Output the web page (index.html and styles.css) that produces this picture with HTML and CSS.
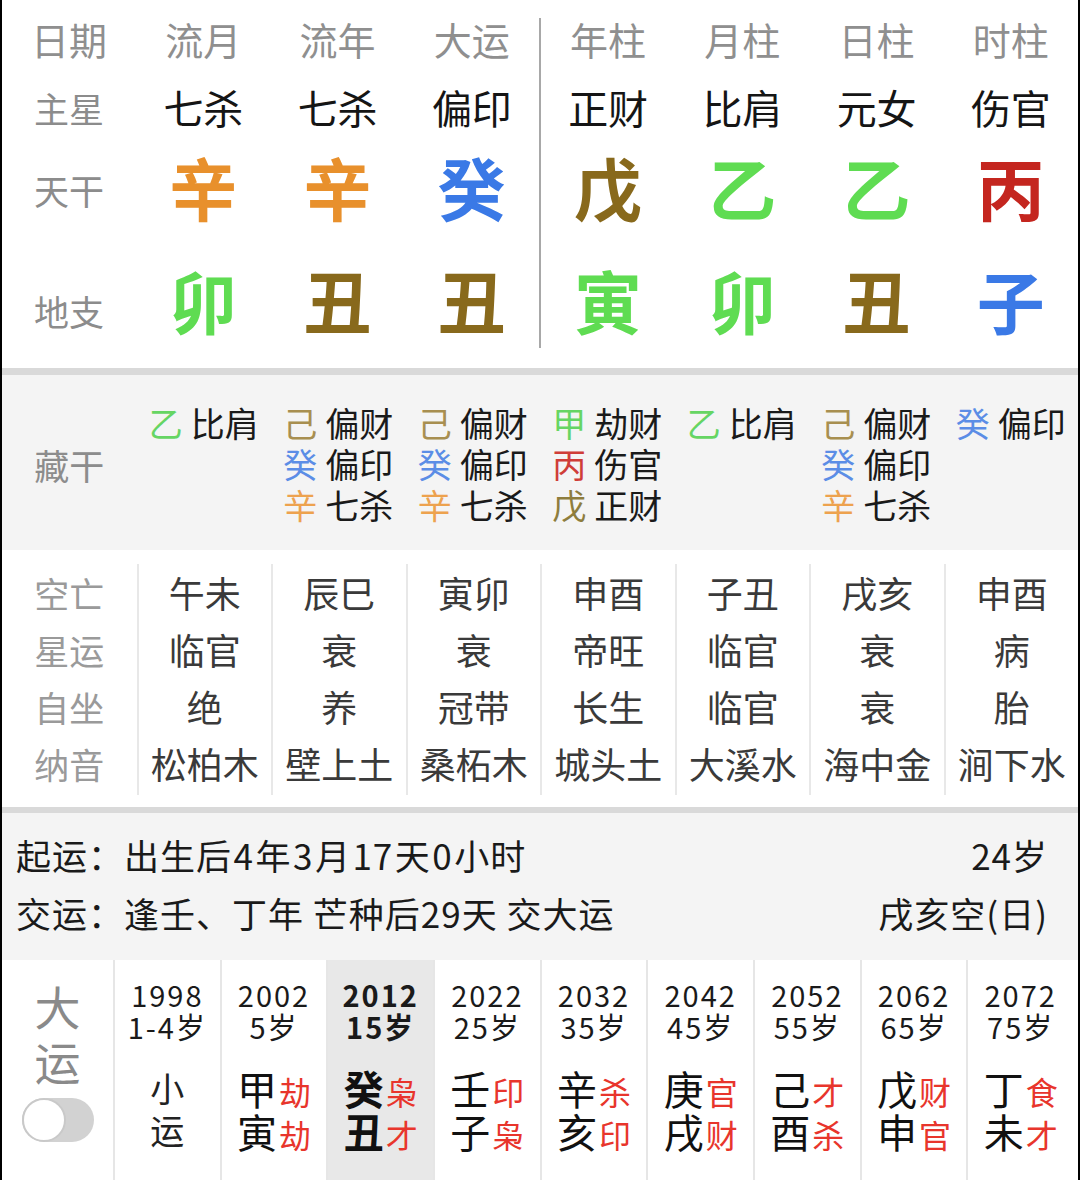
FILE: index.html
```html
<!DOCTYPE html>
<html lang="zh-CN">
<head>
<meta charset="utf-8">
<title>八字排盘</title>
<link rel="stylesheet" href="styles.css">
</head>
<body>
<div class="page">
  <section class="pillars">
    <div class="pgroup">
      <div class="cell hd">日期</div><div class="cell hd">流月</div><div class="cell hd">流年</div><div class="cell hd">大运</div>
      <div class="cell lbl">主星</div><div class="cell star">七杀</div><div class="cell star">七杀</div><div class="cell star">偏印</div>
      <div class="cell lbl">天干</div><div class="cell big c-orange">辛</div><div class="cell big c-orange">辛</div><div class="cell big c-blue">癸</div>
      <div class="cell lbl br-l">地支</div><div class="cell big br c-green">卯</div><div class="cell big br c-brown">丑</div><div class="cell big br c-brown">丑</div>
    </div>
    <div class="pgroup right">
      <div class="cell hd">年柱</div><div class="cell hd">月柱</div><div class="cell hd">日柱</div><div class="cell hd">时柱</div>
      <div class="cell star">正财</div><div class="cell star">比肩</div><div class="cell star">元女</div><div class="cell star">伤官</div>
      <div class="cell big c-brown">戊</div><div class="cell big c-green">乙</div><div class="cell big c-green">乙</div><div class="cell big c-red">丙</div>
      <div class="cell big br c-green">寅</div><div class="cell big br c-green">卯</div><div class="cell big br c-brown">丑</div><div class="cell big br c-blue">子</div>
    </div>
  </section>
  <div class="band"></div>
  <section class="hidden">
    <div class="hlabel">藏干</div>
    <div class="hcol"><div class="stack"><div><span class="g h-green">乙</span>比肩</div></div></div>
    <div class="hcol"><div class="stack"><div><span class="g h-brown">己</span>偏财</div><div><span class="g h-blue">癸</span>偏印</div><div><span class="g h-orange">辛</span>七杀</div></div></div>
    <div class="hcol"><div class="stack"><div><span class="g h-brown">己</span>偏财</div><div><span class="g h-blue">癸</span>偏印</div><div><span class="g h-orange">辛</span>七杀</div></div></div>
    <div class="hcol"><div class="stack"><div><span class="g h-green">甲</span>劫财</div><div><span class="g h-red">丙</span>伤官</div><div><span class="g h-olive">戊</span>正财</div></div></div>
    <div class="hcol"><div class="stack"><div><span class="g h-green">乙</span>比肩</div></div></div>
    <div class="hcol"><div class="stack"><div><span class="g h-brown">己</span>偏财</div><div><span class="g h-blue">癸</span>偏印</div><div><span class="g h-orange">辛</span>七杀</div></div></div>
    <div class="hcol"><div class="stack"><div><span class="g h-blue">癸</span>偏印</div></div></div>
  </section>
  <section class="info">
    <div class="icol lab"><div>空亡</div><div>星运</div><div>自坐</div><div>纳音</div></div>
    <div class="icol"><div>午未</div><div>临官</div><div>绝</div><div>松柏木</div></div>
    <div class="icol"><div>辰巳</div><div>衰</div><div>养</div><div>壁上土</div></div>
    <div class="icol"><div>寅卯</div><div>衰</div><div>冠带</div><div>桑柘木</div></div>
    <div class="icol"><div>申酉</div><div>帝旺</div><div>长生</div><div>城头土</div></div>
    <div class="icol"><div>子丑</div><div>临官</div><div>临官</div><div>大溪水</div></div>
    <div class="icol"><div>戌亥</div><div>衰</div><div>衰</div><div>海中金</div></div>
    <div class="icol"><div>申酉</div><div>病</div><div>胎</div><div>涧下水</div></div>
  </section>
  <div class="band band2"></div>
  <section class="qiyun">
    <div class="qrow"><span>起运：出生后<span class="n">4</span>年<span class="n">3</span>月<span class="n">17</span>天<span class="n">0</span>小时</span><span>24岁</span></div>
    <div class="qrow"><span>交运：逢壬、丁年 芒种后29天 交大运</span><span>戌亥空(日)</span></div>
  </section>
  <section class="dayun">
    <div class="dfirst">
      <div class="dy-title"><div>大</div><div>运</div></div>
      <div class="toggle"><span class="knob"></span></div>
    </div>
    <div class="dcol"><div class="yr">1998</div><div class="yr">1-4岁</div><div class="xy"><div>小</div><div>运</div></div></div>
    <div class="dcol"><div class="yr">2002</div><div class="yr">5岁</div><div class="stems"><div class="srow"><span class="sb">甲</span><span class="sr">劫</span></div><div class="srow"><span class="sb">寅</span><span class="sr">劫</span></div></div></div>
    <div class="dcol sel"><div class="yr">2012</div><div class="yr">15岁</div><div class="stems"><div class="srow"><span class="sb">癸</span><span class="sr">枭</span></div><div class="srow"><span class="sb">丑</span><span class="sr">才</span></div></div></div>
    <div class="dcol"><div class="yr">2022</div><div class="yr">25岁</div><div class="stems"><div class="srow"><span class="sb">壬</span><span class="sr">印</span></div><div class="srow"><span class="sb">子</span><span class="sr">枭</span></div></div></div>
    <div class="dcol"><div class="yr">2032</div><div class="yr">35岁</div><div class="stems"><div class="srow"><span class="sb">辛</span><span class="sr">杀</span></div><div class="srow"><span class="sb">亥</span><span class="sr">印</span></div></div></div>
    <div class="dcol"><div class="yr">2042</div><div class="yr">45岁</div><div class="stems"><div class="srow"><span class="sb">庚</span><span class="sr">官</span></div><div class="srow"><span class="sb">戌</span><span class="sr">财</span></div></div></div>
    <div class="dcol"><div class="yr">2052</div><div class="yr">55岁</div><div class="stems"><div class="srow"><span class="sb">己</span><span class="sr">才</span></div><div class="srow"><span class="sb">酉</span><span class="sr">杀</span></div></div></div>
    <div class="dcol"><div class="yr">2062</div><div class="yr">65岁</div><div class="stems"><div class="srow"><span class="sb">戊</span><span class="sr">财</span></div><div class="srow"><span class="sb">申</span><span class="sr">官</span></div></div></div>
    <div class="dcol"><div class="yr">2072</div><div class="yr">75岁</div><div class="stems"><div class="srow"><span class="sb">丁</span><span class="sr">食</span></div><div class="srow"><span class="sb">未</span><span class="sr">才</span></div></div></div>
  </section>
</div>
</body>
</html>
```

FILE: styles.css
```css
* { box-sizing: border-box; margin: 0; padding: 0; }
html, body { background: #000; }
body {
  width: 1080px;
  height: 1180px;
  overflow: hidden;
  font-family: "Noto Sans CJK SC", "Noto Sans", sans-serif;
}
.page {
  margin: 0 2px;
  background: #fff;
  height: 1180px;
  overflow: hidden;
}

/* pillars */
.pillars { display: flex; height: 368px; }
.pgroup {
  flex: 1;
  display: grid;
  grid-template-columns: repeat(4, 1fr);
  grid-template-rows: 48px 88px 76px 118px;
  margin-top: 18px;
  align-self: flex-start;
}
.pgroup.right { border-left: 2px solid #a8a8a8; }
.cell {
  display: flex;
  align-items: center;
  justify-content: center;
  line-height: 1;
  padding-bottom: 0.15em;
}
.hd { font-size: 38px; color: #8f8f8f; }
.lbl { font-size: 35px; color: #8c8c8c; }
.star { font-size: 40px; color: #151515; }
.big { font-size: 68px; font-weight: 700; }
.br { padding-top: 32px; }
.br-l { padding-top: 48px; }
.c-orange { color: #e8902c; }
.c-blue { color: #3a79e6; }
.c-brown { color: #88691c; }
.c-green { color: #5fdc52; }
.c-red { color: #c4261f; }

.band { height: 7px; background: #d9d9d9; }
.band2 { height: 6px; }

/* hidden stems */
.hidden {
  display: grid;
  grid-template-columns: repeat(8, 1fr);
  background: #f4f4f4;
  height: 175px;
  padding: 27px 0 25px;
}
.hlabel {
  align-self: center;
  text-align: center;
  font-size: 35px;
  line-height: 1;
  color: #8c8c8c;
  padding-top: 2px;
}
.hcol { display: flex; justify-content: center; }
.stack { font-size: 34px; line-height: 41px; color: #1a1a1a; }
.stack .g { margin-right: 8px; }
.h-green { color: #66d563; }
.h-brown { color: #a88f50; }
.h-blue { color: #5b8de6; }
.h-orange { color: #eda24e; }
.h-red { color: #cf3d38; }
.h-olive { color: #8e7d3d; }

/* info grid */
.info {
  display: grid;
  grid-template-columns: repeat(8, 1fr);
  height: 257px;
  padding: 14px 0 15px;
}
.icol { display: flex; flex-direction: column; align-items: center; padding-top: 3px; }
.icol + .icol { border-left: 2px solid #e8e8e8; }
.icol div { height: 57px; line-height: 57px; font-size: 36px; color: #3a3a3a; white-space: nowrap; margin-top: -3px; margin-bottom: 3px; }
.icol.lab div { color: #9a9a9a; font-size: 35px; }

/* qiyun */
.qiyun {
  background: #f4f4f4;
  height: 147px;
  padding: 12px 30px 19px 14px;
}
.qrow {
  display: flex;
  justify-content: space-between;
  align-items: center;
  height: 58px;
  font-size: 35px;
  color: #1a1a1a;
  letter-spacing: 1px;
}
.qrow .n { padding: 0 1.5px; }

/* dayun */
.dayun { display: flex; height: 220px; padding-right: 5px; }
.dfirst {
  width: 111px;
  display: flex;
  flex-direction: column;
  align-items: center;
  padding-top: 18px;
}
.dy-title { font-size: 46px; line-height: 55px; color: #8a8a8a; text-align: center; }
.toggle {
  margin-top: 10px;
  width: 72px;
  height: 44px;
  border-radius: 22px;
  background: #d2d2d2;
  position: relative;
}
.knob {
  position: absolute;
  left: 0;
  top: 0;
  width: 44px;
  height: 44px;
  border-radius: 50%;
  background: #fff;
  border: 2px solid #c9c9c9;
}
.dcol {
  flex: 1;
  border-left: 2px solid #e6e6e6;
  display: flex;
  flex-direction: column;
  align-items: center;
  padding-top: 18px;
}
.dcol.sel { background: #e8e8e8; }
.dcol.sel .yr, .dcol.sel .sb { font-weight: 700; }
.yr { font-size: 29px; line-height: 32px; color: #1a1a1a; letter-spacing: 2px; }
.stems { margin-top: 25px; }
.srow { display: flex; align-items: baseline; height: 43px; }
.sb { display: inline-block; font-size: 40px; line-height: 43px; color: #111; }
.sr { display: inline-block; font-size: 32px; line-height: 43px; color: #e8352c; margin-left: 2px; }
.xy { margin-top: 25px; font-size: 34px; line-height: 42px; color: #222; text-align: center; }
```
